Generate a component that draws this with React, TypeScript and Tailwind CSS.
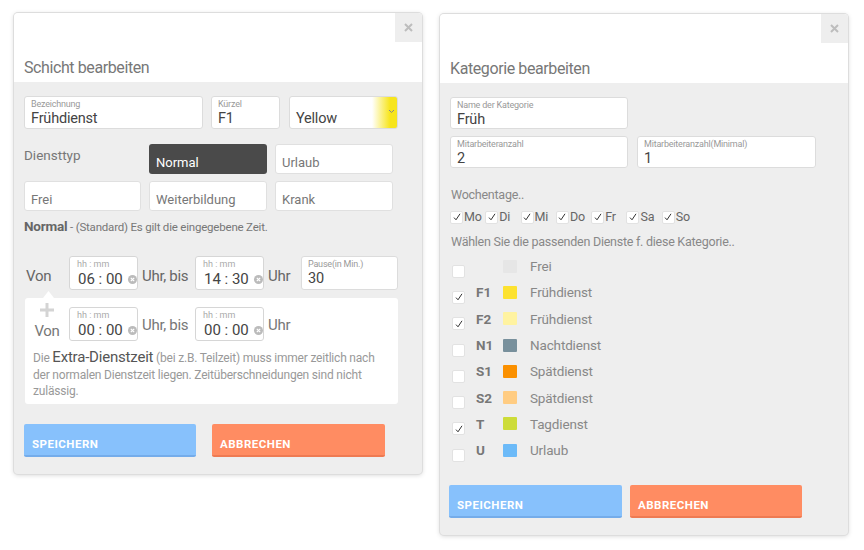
import React from "react";

function Field({ label, value, className = "" }: { label: string; value: string; className?: string }) {
  return (
    <div className={`bg-white border border-[#dcdcdc] rounded-[3px] px-[6px] pt-[2px] ${className}`}>
      <div className="text-[9px] leading-[11px] tracking-[-0.2px] text-[#999]">{label}</div>
      <div className="text-[14.5px] leading-[18px] tracking-[-0.2px] text-[#444]">{value}</div>
    </div>
  );
}

function TimeInput({ value }: { value: string }) {
  return (
    <div className="w-[69px] h-[34px] bg-white border border-[#d6d6d6] rounded-[3px] pl-[7px] pt-[2px] relative shrink-0">
      <div className="text-[9px] leading-[11px] text-[#aaa]">hh : mm</div>
      <div className="text-[15px] leading-[19px] text-[#444] pl-[1px] whitespace-nowrap">{value}</div>
      <div className="absolute left-[58px] top-[18px] w-[9px] h-[9px] rounded-full bg-[#bbb] flex items-center justify-center">
        <svg width="5" height="5" viewBox="0 0 5 5">
          <path d="M0.8 0.8 L4.2 4.2 M4.2 0.8 L0.8 4.2" stroke="#fff" strokeWidth="1.2" />
        </svg>
      </div>
    </div>
  );
}

function CloseBtn() {
  return (
    <div className="absolute top-0 right-0 w-[27px] h-[29px] bg-[#eeeeee] flex items-center justify-center">
      <svg width="9" height="9" viewBox="0 0 9 9">
        <path d="M1 1 L8 8 M8 1 L1 8" stroke="#bdbdbd" strokeWidth="2" />
      </svg>
    </div>
  );
}

function Btn({ label, blue, className = "" }: { label: string; blue: boolean; className?: string }) {
  return (
    <div
      className={`h-[33px] rounded-[2px] border-b-2 flex items-end pb-[3px] px-[8px] text-white text-[11.5px] leading-[16px] font-bold tracking-[0.5px] ${
        blue ? "bg-[#87c1fc] border-[#74acea]" : "bg-[#ff8c62] border-[#ee7a52]"
      } ${className}`}
    >
      {label}
    </div>
  );
}

function Check({ checked }: { checked: boolean }) {
  return (
    <div className="w-[13px] h-[13px] bg-white border border-[#e2e2e2] rounded-[2px] flex items-center justify-center shrink-0">
      {checked && (
        <svg width="8" height="8" viewBox="0 0 8 8">
          <path d="M1 4.6 L3 6.8 L7 0.8" stroke="#333" strokeWidth="1" fill="none" />
        </svg>
      )}
    </div>
  );
}

const dienste = [
  { code: "", color: "#e6e6e6", name: "Frei", checked: false },
  { code: "F1", color: "#fde22f", name: "Frühdienst", checked: true },
  { code: "F2", color: "#fff3a1", name: "Frühdienst", checked: true },
  { code: "N1", color: "#78909c", name: "Nachtdienst", checked: false },
  { code: "S1", color: "#fb9000", name: "Spätdienst", checked: false },
  { code: "S2", color: "#ffcc82", name: "Spätdienst", checked: false },
  { code: "T", color: "#cddc39", name: "Tagdienst", checked: true },
  { code: "U", color: "#6cbaf8", name: "Urlaub", checked: false },
];

const days = ["Mo", "Di", "Mi", "Do", "Fr", "Sa", "So"];

const typBtn =
  "bg-white border border-[#e0e0e0] rounded-[3px] flex items-end pb-[1px] px-[6px] text-[13px] leading-[18px] text-[#777]";

export default function App() {
  return (
    <div className="w-[864px] h-[550px] bg-white flex items-start pl-[14px] pt-[13px] font-['Roboto',sans-serif] text-[#777]">
      {/* Left panel */}
      <div className="w-[408px] h-[461px] bg-[#eeeeee] rounded-[4px] shadow-[0_0_0_1px_#dddddd,0_1px_5px_rgba(0,0,0,0.18)] overflow-hidden flex flex-col shrink-0">
        <div className="h-[69px] bg-white relative flex items-end px-[10px] pb-[4px]">
          <span className="text-[16px] leading-[20px] tracking-[-0.4px] text-[#777]">Schicht bearbeiten</span>
          <CloseBtn />
        </div>
        <div className="px-[10px] pt-[14px]">
          <div className="flex">
            <Field label="Bezeichnung" value="Frühdienst" className="w-[179px] h-[33px]" />
            <Field label="Kürzel" value="F1" className="w-[69px] h-[33px] ml-[8px]" />
            <div className="w-[109px] h-[33px] ml-[9px] rounded-[3px] border border-[#dcdcdc] bg-[linear-gradient(to_right,#ffffff_0px,#ffffff_82px,#f7e51c_100px,#f7e51c_109px)] relative">
              <div className="absolute left-[6px] top-[13px] text-[14.5px] leading-[18px] tracking-[-0.2px] text-[#444]">Yellow</div>
              <svg className="absolute left-[98px] top-[12px]" width="7" height="5" viewBox="0 0 7 5">
                <path d="M1 1 L3.5 3.5 L6 1" stroke="#888" strokeWidth="1" fill="none" />
              </svg>
            </div>
          </div>

          <div className="mt-[15px] grid grid-cols-[117px_118px_118px] grid-rows-[30px_30px] gap-x-[8px] gap-y-[7px]">
            <div className="text-[13.5px] leading-[18px] pt-[2px] text-[#777]">Diensttyp</div>
            <div className="bg-[#4a4a4a] rounded-[3px] flex items-end pb-[2px] px-[7px] text-[13px] leading-[18px] text-white">Normal</div>
            <div className={typBtn}>Urlaub</div>
            <div className={typBtn}>Frei</div>
            <div className={typBtn}>Weiterbildung</div>
            <div className={typBtn}>Krank</div>
          </div>

          <div className="mt-[6px] leading-[18px] text-[11.5px] tracking-[-0.2px] text-[#777] whitespace-nowrap">
            <span className="text-[13.5px] font-bold text-[#666]">Normal</span> - (Standard) Es gilt die eingegebene Zeit.
          </div>

          <div className="mt-[20px] flex items-center">
            <div className="w-[45px] pl-[2px] mt-[6px] text-[15px] leading-[20px] tracking-[-0.3px] text-[#666]">Von</div>
            <TimeInput value="06 : 00" />
            <div className="ml-[4px] w-[53px] mt-[6px] text-[15px] leading-[20px] tracking-[-0.3px] text-[#666] whitespace-nowrap">Uhr, bis</div>
            <TimeInput value="14 : 30" />
            <div className="ml-[4px] w-[33px] mt-[6px] text-[15px] leading-[20px] tracking-[-0.3px] text-[#666]">Uhr</div>
            <Field label="Pause(in Min.)" value="30" className="w-[97px] h-[34px]" />
          </div>

          <div className="mt-[8px] ml-[1px] w-[373px] h-[106px] bg-white rounded-[3px] relative">
            <svg className="absolute left-[18px] top-[-7px]" width="11" height="7" viewBox="0 0 11 7">
              <path d="M0 7 L5.5 0 L11 7 Z" fill="#ffffff" />
            </svg>
            <div className="flex">
              <div className="w-[44px] flex flex-col items-center pt-[4px]">
                <div className="h-[16px] flex items-center justify-center">
                  <svg width="16" height="16" viewBox="0 0 16 16">
                    <path d="M8 1 V15 M1 8 H15" stroke="#d4d4d4" strokeWidth="3" />
                  </svg>
                </div>
                <div className="mt-[3px] text-[15px] leading-[20px] tracking-[-0.3px] text-[#777]">Von</div>
              </div>
              <div className="pt-[9px] flex items-center">
                <TimeInput value="00 : 00" />
                <div className="ml-[4px] w-[53px] mt-[2px] text-[15px] leading-[20px] tracking-[-0.3px] text-[#777] whitespace-nowrap">Uhr, bis</div>
                <TimeInput value="00 : 00" />
                <div className="ml-[4px] mt-[2px] text-[15px] leading-[20px] tracking-[-0.3px] text-[#777]">Uhr</div>
              </div>
            </div>
            <div className="mt-[8px] pl-[8px] text-[12px] leading-[16.5px] tracking-[-0.2px] text-[#999] whitespace-nowrap">
              Die <span className="text-[15px] text-[#555]">Extra-Dienstzeit</span> (bei z.B. Teilzeit) muss immer zeitlich nach
              <br />
              der normalen Dienstzeit liegen. Zeitüberschneidungen sind nicht
              <br />
              zulässig.
            </div>
          </div>

          <div className="mt-[20px] flex">
            <Btn label="SPEICHERN" blue={true} className="w-[172px]" />
            <Btn label="ABBRECHEN" blue={false} className="w-[173px] ml-[16px]" />
          </div>
        </div>
      </div>

      {/* Right panel */}
      <div className="ml-[18px] mt-[1px] w-[408px] h-[521px] bg-[#eeeeee] rounded-[4px] shadow-[0_0_0_1px_#dddddd,0_1px_5px_rgba(0,0,0,0.18)] overflow-hidden flex flex-col shrink-0">
        <div className="h-[69px] bg-white relative flex items-end px-[10px] pb-[4px]">
          <span className="text-[16px] leading-[20px] tracking-[-0.4px] text-[#777]">Kategorie bearbeiten</span>
          <CloseBtn />
        </div>
        <div className="px-[10px] pt-[14px]">
          <Field label="Name der Kategorie" value="Früh" className="w-[178px] h-[32px]" />
          <div className="mt-[7px] flex">
            <Field label="Mitarbeiteranzahl" value="2" className="w-[178px] h-[32px]" />
            <Field label="Mitarbeiteranzahl(Minimal)" value="1" className="w-[179px] h-[32px] ml-[9px]" />
          </div>

          <div className="mt-[18px] pl-[1px] text-[12.5px] leading-[18px] tracking-[-0.25px] text-[#888]">Wochentage..</div>
          <div className="mt-[5px] flex">
            {days.map((d) => (
              <div key={d} className="w-[35.3px] flex items-center">
                <Check checked={true} />
                <span className="ml-[1px] text-[12.5px] leading-[16px] tracking-[-0.2px] text-[#666]">{d}</span>
              </div>
            ))}
          </div>

          <div className="mt-[8px] pl-[1px] text-[12.5px] leading-[18px] tracking-[-0.25px] text-[#888] whitespace-nowrap">
            Wählen Sie die passenden Dienste f. diese Kategorie..
          </div>

          <div className="mt-[2px]">
            {dienste.map((r) => (
              <div key={r.name + r.code} className="h-[26.3px] flex items-center">
                <div className="ml-[2px] mt-[10px]">
                  <Check checked={r.checked} />
                </div>
                <div className="ml-[11px] w-[27px] text-[13.5px] leading-[20px] font-bold text-[#777]">{r.code}</div>
                <div className="w-[14px] h-[13px] rounded-[1px]" style={{ backgroundColor: r.color }} />
                <div className="ml-[13px] text-[13.5px] leading-[20px] tracking-[-0.15px] text-[#888]">{r.name}</div>
              </div>
            ))}
          </div>

          <div className="mt-[22px] -ml-[1px] flex">
            <Btn label="SPEICHERN" blue={true} className="w-[173px]" />
            <Btn label="ABBRECHEN" blue={false} className="w-[172px] ml-[8px]" />
          </div>
        </div>
      </div>
    </div>
  );
}
